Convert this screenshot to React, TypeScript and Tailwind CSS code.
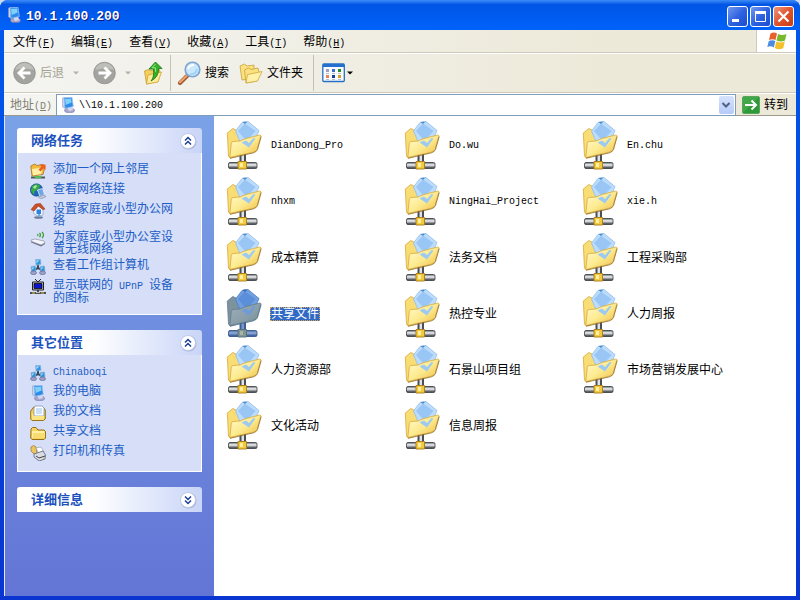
import { useState, type ReactNode } from "react";

const mono = "font-['Liberation_Mono','Noto_Sans_CJK_SC',monospace]";

function Latin({ children }: { children: ReactNode }) {
  return <span className={`${mono} text-[10px] leading-none`}>{children}</span>;
}

function ComputerIcon() {
  return (
    <svg className="h-4 w-4 shrink-0" viewBox="0 0 16 16" aria-hidden="true">
      <ellipse cx="9.500" cy="13.400" rx="5" ry="2.200" fill="#a9a6cf" stroke="#6f73a5" strokeWidth=".6" />
      <path d="M7 10l5-1 1 4-4 1z" fill="#d6d9ee" />
      <path d="M2.500 1l2-.7v11l-2-1.300z" fill="#c9d3ee" stroke="#8a94bd" strokeWidth=".5" />
      <path d="M4 .8L12 .3l1.300 9.200-8.300 2z" fill="#2c8bea" stroke="#9fc3ee" strokeWidth=".8" />
      <path d="M5 2l6-.6.6 4L5.700 8z" fill="#7fd0fb" />
    </svg>
  );
}

function AddPlaceIcon() {
  return (
    <svg className="h-4 w-4 shrink-0" viewBox="0 0 16 16" aria-hidden="true">
      <path d="M1 14.500h14" stroke="#4d5b57" strokeWidth="2" />
      <path d="M5 14h6" stroke="#4fc04f" strokeWidth="2" />
      <path d="M.8 3l4-2 2 1.500L13 1.500l2 2-2 8-11 1.500z" fill="#f3b93c" stroke="#a5761a" strokeWidth=".8" />
      <path d="M2 6l11-1.500-2 6.500-8 1.500z" fill="#fff0a5" />
      <path d="M9.500 1.500h6v5.500l-2-1.500-3 3-2-2 3-3z" fill="#ef5f22" />
    </svg>
  );
}

function GlobeIcon() {
  return (
    <svg className="h-4 w-4 shrink-0" viewBox="0 0 16 16" aria-hidden="true">
      <circle cx="6.500" cy="7" r="6.200" fill="#1d63b8" stroke="#184a8c" strokeWidth=".6" />
      <path d="M2 3l4-2 4 1-1 4-4 2-1 4-3-4z" fill="#38a84b" />
      <path d="M3 4l3-2 1 1-2 3z" fill="#b4eda4" />
      <path d="M7.500 7l5-1.500 2 6-4.500 2z" fill="#6aa7e5" stroke="#e8effa" strokeWidth=".8" />
      <path d="M8.500 14l6-2 1.200 1.800-5 2z" fill="#c9cfe0" stroke="#666f90" strokeWidth=".5" />
    </svg>
  );
}

function HomeIcon() {
  return (
    <svg className="h-4 w-4 shrink-0" viewBox="0 0 16 16" aria-hidden="true">
      <ellipse cx="8.500" cy="14.500" rx="4.500" ry="1.300" fill="#6f7a90" />
      <path d="M3 6l5-3 5 3v6l-5 1-4-2z" fill="#f4f5fb" stroke="#8b93b0" strokeWidth=".6" />
      <path d="M6.500 6.500h4.500v4.500H6.500z" fill="#2c83e2" />
      <path d="M8 11h2v3H8z" fill="#59b3f4" />
      <path d="M1 6.500l4.500-5.500 5-.5L15 6l-2 .8-4.500-3.800L4 8z" fill="#cc4f28" stroke="#93351b" strokeWidth=".5" />
    </svg>
  );
}

function WirelessIcon() {
  return (
    <svg className="h-4 w-4 shrink-0" viewBox="0 0 16 16" aria-hidden="true">
      <path d="M7.500 3q1 1 0 2M9.500 2q2 2 0 4M12 1q3 3 0 6" fill="none" stroke="#3c9c35" strokeWidth="1.200" />
      <path d="M1 9l4-1 9 2 1 2-4 2-10-4z" fill="#f5f6fa" stroke="#8c91a5" strokeWidth=".7" />
      <path d="M1 10.500l10 3.500 4-2v1l-4 2.500-10-4z" fill="#70778d" />
    </svg>
  );
}

function WorkgroupIcon() {
  return (
    <svg className="h-4 w-4 shrink-0" viewBox="0 0 16 16" aria-hidden="true">
      <path d="M8 5v4M8 9l-4 2M8 9l4 2" stroke="#34495d" strokeWidth="2" />
      <path d="M5.500.6l5-.3.500 5-5 .9z" fill="#3695e0" stroke="#8fb7df" strokeWidth=".7" />
      <path d="M1 7.500l4.500-.6.500 5-4.500.6zM10 7.500l4.500-.6.500 5-4.500.6z" fill="#3590da" stroke="#8fb7df" strokeWidth=".7" />
      <ellipse cx="3.500" cy="13.800" rx="3" ry="1.800" fill="#a09fc8" stroke="#555a8b" strokeWidth=".6" />
      <ellipse cx="12.500" cy="13.800" rx="3" ry="1.800" fill="#a09fc8" stroke="#555a8b" strokeWidth=".6" />
      <path d="M6.300 1.500l3.200-.3-3 3zM2 8.500l2.500-.3-2.300 2.500zM11 8.500l2.500-.3-2.300 2.500z" fill="#a5e1fc" />
    </svg>
  );
}

function UpnpIcon() {
  return (
    <svg className="h-4 w-4 shrink-0" viewBox="0 0 16 16" aria-hidden="true">
      <path d="M5 0l3 3 3-3" fill="none" stroke="#222" />
      <path d="M2.500 3h11v8h-11z" fill="#c9c9c9" stroke="#222" />
      <path d="M4 4.500h8v5H4z" fill="#0d16c8" stroke="#000" strokeWidth=".7" />
      <path d="M8 11v3M0 14h16" stroke="#222" strokeWidth="1.500" />
      <path d="M2 14h3M11 14h3" stroke="#d8cf3c" />
      <path d="M6 13.500h4" stroke="#b9b9b9" />
    </svg>
  );
}

function DocumentsIcon() {
  return (
    <svg className="h-4 w-4 shrink-0" viewBox="0 0 16 16" aria-hidden="true">
      <path d="M.7 6l3-4h9l2.600 3v9l-2 1.500H2L.7 14z" fill="#f3cc59" stroke="#9a7417" />
      <path d="M5 1h7l2 2v8H4V3z" fill="#fff" stroke="#6d8cb7" strokeWidth=".7" />
      <path d="M6 4h6M6 6h6M6 8h6" stroke="#78b2e8" strokeWidth=".8" />
      <path d="M1.500 7L4 11h10v2.500l-1 1.500H2z" fill="#ffe583" />
    </svg>
  );
}

function FolderIcon() {
  return (
    <svg className="h-4 w-4 shrink-0" viewBox="0 0 16 16" aria-hidden="true">
      <path d="M1 4l1.500-1.500H6L8 5h6l1.500 1.500v6.500L14 14.500H2L.7 13z" fill="#f6d35e" stroke="#94701a" />
      <path d="M2 6h12l.5 1v5L13 13H2.500L2 12z" fill="#fff0a4" />
      <path d="M3 8h11v5H3z" fill="#f9dc71" />
    </svg>
  );
}

function PrinterIcon() {
  return (
    <svg className="h-4 w-4 shrink-0" viewBox="0 0 16 16" aria-hidden="true">
      <path d="M1 2q3-3 5 0l1 7H4L1 6z" fill="#efc45c" stroke="#7d6a32" strokeWidth=".6" />
      <path d="M6 3l5-1 3 5-5 2z" fill="#fff" stroke="#8c93a5" strokeWidth=".6" />
      <path d="M4 9l9-3 2.500 4-.5 4-6 2-5-4z" fill="#d9dce4" stroke="#5b6275" strokeWidth=".8" />
      <path d="M6 11l3 2 6-2" fill="none" stroke="#3e465a" />
      <circle cx="13.500" cy="13" r=".7" fill="#e9c22e" />
    </svg>
  );
}

function NetworkFolderIcon({ selected }: { selected?: boolean }) {
  return (
    <svg className="h-[50px] w-9 shrink-0" viewBox="0 0 36 50" aria-hidden="true">
      <defs>
        <linearGradient id="folderFront" x1="0" y1="0" x2="1" y2="1">
          <stop offset="0" stopColor="#fffbd0" />
          <stop offset=".5" stopColor="#fdeb90" />
          <stop offset="1" stopColor="#ecb83c" />
        </linearGradient>
        <linearGradient id="pipe" x1="0" y1="0" x2="0" y2="1">
          <stop offset="0" stopColor="#5c6068" />
          <stop offset=".4" stopColor="#f4f6f8" />
          <stop offset="1" stopColor="#24272c" />
        </linearGradient>
        <linearGradient id="selectedFront" x1="0" y1="0" x2="1" y2="1">
          <stop offset="0" stopColor="#a0b1bb" />
          <stop offset="1" stopColor="#77909a" />
        </linearGradient>
        <linearGradient id="selectedPipe" x1="0" y1="0" x2="0" y2="1">
          <stop offset="0" stopColor="#46659b" />
          <stop offset=".4" stopColor="#93afdd" />
          <stop offset="1" stopColor="#264a86" />
        </linearGradient>
      </defs>
      <path d="M13.500 33h6.500v9h-6.500z" fill={selected ? "#3b5f97" : "#4b4f56"} />
      <path d="M15.500 33h2.500v9h-2.500z" fill={selected ? "#7b9acb" : "#dfe3e8"} />
      <rect x="2.500" y="41.500" width="28.500" height="6" rx="1.500" fill={selected ? "url(#selectedPipe)" : "url(#pipe)"} stroke={selected ? "#2c4d88" : "#3a3d43"} strokeWidth=".8" />
      <path d="M12 40.500h8.500v7.500H12z" fill={selected ? "#83958c" : "#f3c93d"} stroke={selected ? "#52707f" : "#a97c16"} strokeWidth=".9" />
      <path d="M14 42h3v4h-3z" fill={selected ? "#a5b5ac" : "#fdeea0"} />
      <path d="M1.300 12l5.500-4.500 3.200 1.500 1 3.500 20 2-3 14L4 37l-1.500-2z" fill={selected ? "#7c939e" : "#f8dc74"} stroke={selected ? "#637d91" : "#d8a93c"} strokeWidth=".8" />
      <path d="M9.500 10L16 1.500l3-1h3L33 9.500 29 19l-14 4z" fill={selected ? "#719fe0" : "#bcdcfc"} stroke={selected ? "#4e7dc3" : "#93bce8"} strokeWidth=".8" />
      <path d="M12 10l7-7.500 10.500 7.500-9 10z" fill={selected ? "#5c8fda" : "#9ac6f6"} />
      <path d="M16.500 1h4.500l-2 2z" fill={selected ? "#3969aa" : "#4c8ac8"} />
      <path d="M3.800 36.500L5.300 22.500q0-1.500 1.700-2l7-.5 6-2.500L33.800 14q1.200 0 1 1L31 28.500q-.5 1.500-3 2.500z" fill={selected ? "url(#selectedFront)" : "url(#folderFront)"} stroke={selected ? "#607c8f" : "#d8aa3d"} strokeWidth=".8" />
      <path d="M4 37.300l23.500-5.500q3.500-1.300 4-3.300L35.200 15.500" fill="none" stroke={selected ? "#4b6d85" : "#8f6a22"} strokeWidth=".8" />
      <path d="M15.500 21.500l4.500-2 3 2.500 4.500-5 2 .500-6.500 9z" fill={selected ? "#6f9ada" : "#9fcaf0"} />
    </svg>
  );
}

function NavArrow({ back }: { back?: boolean }) {
  return (
    <svg className="h-6 w-6" viewBox="0 0 24 24" aria-hidden="true">
      <circle cx="12.500" cy="12" r="10.800" fill="#a3a3a0" stroke="#8f8f8c" strokeWidth=".8" />
      <path d="M3 9a10 10 0 0 1 19 0q-9-3-19 0z" fill="#bdbdba" />
      {back ? (
        <path d="M18.500 12H8M12.500 6.500L7 12l5.500 5.500" fill="none" stroke="#fff" strokeWidth="2.800" />
      ) : (
        <path d="M6.500 12H17M12.500 6.500L18 12l-5.500 5.500" fill="none" stroke="#fff" strokeWidth="2.800" />
      )}
    </svg>
  );
}

function Caret({ dark }: { dark?: boolean }) {
  return (
    <svg className="h-2 w-2" viewBox="0 0 8 8" aria-hidden="true">
      <path d="M1 2.500h6L4 5.500z" fill={dark ? "#000" : "#b4b2a6"} />
    </svg>
  );
}

function UpFolderIcon() {
  return (
    <svg className="h-6 w-[22px]" viewBox="0 0 22 24" aria-hidden="true">
      <path d="M2.500 10l4-1.500 2.500 1 8-1.500 1 3-2 9.500L4.500 23z" fill="#f4cf59" stroke="#c79a31" strokeWidth=".8" />
      <path d="M4.500 23L6 14l13.500-3-3.500 10z" fill="#ffec98" stroke="#cfa23a" strokeWidth=".8" />
      <path d="M13.500 1l6.500 6.500h-3.500q.5 8.500-7.500 12.500 3.500-4 2.500-12H7z" fill="#34b32b" stroke="#177515" strokeWidth=".8" />
      <path d="M13.500 3l-3.500 3.800h3.500v4" fill="none" stroke="#9be584" />
    </svg>
  );
}

function SearchIcon() {
  return (
    <svg className="h-6 w-6" viewBox="0 0 24 24" aria-hidden="true">
      <path d="M10 15l-7 7" stroke="#9d5930" strokeWidth="4" strokeLinecap="round" />
      <path d="M9.500 15l-6.500 6.300" stroke="#eca46d" strokeWidth="2.200" strokeLinecap="round" />
      <circle cx="15.500" cy="8.500" r="7.300" fill="#c9e8fc" stroke="#7fa4cf" strokeWidth="1.600" />
      <path d="M11 8q1-4 6-4" fill="none" stroke="#fff" strokeWidth="2" />
      <path d="M13 13q6 1 7-5" fill="none" stroke="#9ed2f7" strokeWidth="2" />
    </svg>
  );
}

function FoldersIcon() {
  return (
    <svg className="h-6 w-6" viewBox="0 0 24 24" aria-hidden="true">
      <path d="M1 5l4.500-2 2.500 2 7-1v3L9 18l-6 1z" fill="#fbe27e" stroke="#c99f3d" strokeWidth=".8" />
      <path d="M5.500 9l4-2 2.500 1.500 7-1.500 1 4-2 9L7 22z" fill="#fae27f" stroke="#c99f3d" strokeWidth=".8" />
      <path d="M7 22l1.500-8.500L23 10.500 18.500 20z" fill="#fff2a8" stroke="#d0a640" strokeWidth=".8" />
    </svg>
  );
}

function ViewsIcon() {
  return (
    <svg className="h-5 w-6" viewBox="0 0 24 20" aria-hidden="true">
      <rect x=".8" y="1" width="21.500" height="17.500" rx="1" fill="#f8fbff" stroke="#256fc4" strokeWidth="1.300" />
      <path d="M1 1h21v3H1z" fill="#2370cf" />
      <path d="M4 6h3v3H4z" fill="#a29bc2" />
      <path d="M10 6h3v3h-3z" fill="#3a72c4" />
      <path d="M16 6h3v3h-3z" fill="#2c8b27" />
      <path d="M4 12h3v3H4z" fill="#eb8451" />
      <path d="M10 12h3v3h-3z" fill="#183e95" />
      <path d="M16 12h3v3h-3z" fill="#d4a221" />
      <path d="M4 10.500h3M10 10.500h3M16 10.500h3M4 16.500h3M10 16.500h3M16 16.500h3" stroke="#b9bfca" />
    </svg>
  );
}

function WindowsLogo() {
  return (
    <svg className="h-[18px] w-5" viewBox="0 0 20 18" aria-hidden="true">
      <path d="M3.500 1.500Q7-.5 10 1.500L8.500 8Q5.500 6.500 2 8z" fill="#e8602c" />
      <path d="M11 2q4 2 8.500 0L18 8.500q-4 2-8.500 0z" fill="#77b82d" />
      <path d="M1.800 9q3.500-1.500 6.500 0L6.800 15.500Q4 13.500.3 15z" fill="#4b8ce0" />
      <path d="M9.300 9.500q4 2 8.500 0l-1.500 6.500q-4 2.500-8.500 0z" fill="#f5bf2a" />
    </svg>
  );
}

function Chevrons({ open }: { open: boolean }) {
  return (
    <svg className="h-5 w-5" viewBox="0 0 20 20" aria-hidden="true">
      <circle cx="10.500" cy="10.500" r="8" fill="#a8b3d8" />
      <circle cx="10" cy="10" r="7.500" fill="#fff" stroke="#bcc5e2" strokeWidth=".8" />
      <path
        d={open ? "M7 9.500l3-3 3 3M7 13.500l3-3 3 3" : "M7 6.500l3 3 3-3M7 10.500l3 3 3-3"}
        fill="none"
        stroke="#1c3f94"
        strokeWidth="1.500"
      />
    </svg>
  );
}

type Task = { icon: ReactNode; label: ReactNode };

function Panel({ title, tasks, startOpen = true }: { title: string; tasks: Task[]; startOpen?: boolean }) {
  const [open, setOpen] = useState(startOpen);
  return (
    <section>
      <h2>
        <button
          type="button"
          aria-expanded={open}
          onClick={() => setOpen(!open)}
          className="flex h-[25px] w-full items-center justify-between rounded-t-[3px] bg-linear-to-r from-white from-40% to-[#c9d5f7] pr-1 pl-3.5 text-[13px] font-bold text-[#1c52bd]"
        >
          {title}
          <Chevrons open={open} />
        </button>
      </h2>
      {open && tasks.length > 0 && (
        <ul className="flex flex-col gap-1 border border-t-0 border-white bg-[#d6dff7] py-2.5 pr-6 pl-3">
          {tasks.map((task, i) => (
            <li key={i}>
              <a href="#" className="flex min-h-4 gap-[7px] text-xs leading-3 text-[#215dc6]">
                {task.icon}
                <span>{task.label}</span>
              </a>
            </li>
          ))}
        </ul>
      )}
    </section>
  );
}

const networkTasks: Task[] = [
  { icon: <AddPlaceIcon />, label: "添加一个网上邻居" },
  { icon: <GlobeIcon />, label: "查看网络连接" },
  { icon: <HomeIcon />, label: "设置家庭或小型办公网络" },
  { icon: <WirelessIcon />, label: "为家庭或小型办公室设置无线网络" },
  { icon: <WorkgroupIcon />, label: "查看工作组计算机" },
  { icon: <UpnpIcon />, label: <>显示联网的<Latin> UPnP </Latin>设备的图标</> },
];

const otherPlaces: Task[] = [
  { icon: <WorkgroupIcon />, label: <Latin>Chinaboqi</Latin> },
  { icon: <ComputerIcon />, label: "我的电脑" },
  { icon: <DocumentsIcon />, label: "我的文档" },
  { icon: <FolderIcon />, label: "共享文档" },
  { icon: <PrinterIcon />, label: "打印机和传真" },
];

const menus = [
  ["文件", "F"],
  ["编辑", "E"],
  ["查看", "V"],
  ["收藏", "A"],
  ["工具", "T"],
  ["帮助", "H"],
];

const shares = [
  "DianDong_Pro", "Do.wu", "En.chu",
  "nhxm", "NingHai_Project", "xie.h",
  "成本精算", "法务文档", "工程采购部",
  "共享文件", "热控专业", "人力周报",
  "人力资源部", "石景山项目组", "市场营销发展中心",
  "文化活动", "信息周报",
];

const isLatin = (name: string) => /^[\w.]+$/.test(name);

export default function App() {
  const [selected, setSelected] = useState("共享文件");
  const [address, setAddress] = useState("\\\\10.1.100.200");

  return (
    <div className="min-h-screen bg-[#c9daf5] font-['Liberation_Sans','Noto_Sans_CJK_SC',sans-serif] text-xs text-black">
      <div className="flex min-h-screen flex-col rounded-t-lg bg-linear-to-b from-[#0058ee] to-[#0a35d0] pb-1">
        <header className="flex h-[30px] shrink-0 items-center rounded-t-lg bg-linear-to-b from-[#3c8cf8] via-[#0055e5] via-15% to-[#0062fb] pr-1.5 pl-1.5">
          <ComputerIcon />
          <h1 className={`${mono} ml-1 flex-1 pt-1 text-[13px] font-bold text-white [text-shadow:1px_1px_#0a1883]`}>10.1.100.200</h1>
          <div className="flex gap-0.5 pt-0.5">
            <button type="button" aria-label="最小化" className="h-[21px] w-[21px] rounded-[3px] border border-white bg-linear-to-br from-[#7397ef] via-[#2f63e0] to-[#1c4bcf]">
              <svg viewBox="0 0 19 19" aria-hidden="true"><path d="M4 12h7v3H4z" fill="#fff" /></svg>
            </button>
            <button type="button" aria-label="最大化" className="h-[21px] w-[21px] rounded-[3px] border border-white bg-linear-to-br from-[#7397ef] via-[#2f63e0] to-[#1c4bcf]">
              <svg viewBox="0 0 19 19" aria-hidden="true"><path d="M4.500 5h10v9.500h-10z" fill="none" stroke="#fff" /><path d="M4 4h11v3H4z" fill="#fff" /></svg>
            </button>
            <button type="button" aria-label="关闭" className="h-[21px] w-[21px] rounded-[3px] border border-white bg-linear-to-br from-[#f0947a] via-[#e0532c] to-[#c63c12]">
              <svg viewBox="0 0 19 19" aria-hidden="true"><path d="M4.500 4.500l10 10M14.500 4.500l-10 10" stroke="#fff" strokeWidth="2.200" /></svg>
            </button>
          </div>
        </header>

        <div className="mx-1 flex flex-1 flex-col bg-linear-to-r from-[#f4f4f1] to-[#ece9d8] to-80%">
          <nav className="flex h-[23px] border-b border-[#cdcabb]">
            <ul className="flex flex-1 items-center gap-4 pt-0.5 pl-[9px]">
              {menus.map(([label, key]) => (
                <li key={key}>
                  <button type="button" className="block leading-4">
                    {label}
                    <Latin>(<u>{key}</u>)</Latin>
                  </button>
                </li>
              ))}
            </ul>
            <div className="flex w-10 items-center justify-center border-l border-[#cdcabb] bg-white">
              <WindowsLogo />
            </div>
          </nav>

          <div className="flex h-10 items-center border-t border-b border-t-white border-b-[#cdcabb] pl-2" role="toolbar" aria-label="标准按钮">
            <button type="button" disabled className="flex items-center gap-1 text-[#a5a294]"><NavArrow back />后退</button>
            <button type="button" disabled aria-label="后退列表" className="ml-2"><Caret /></button>
            <button type="button" disabled aria-label="前进" className="ml-3"><NavArrow /></button>
            <button type="button" disabled aria-label="前进列表" className="ml-2"><Caret /></button>
            <button type="button" aria-label="向上" className="ml-2.5"><UpFolderIcon /></button>
            <span className="ml-1.5 h-9 border-l border-[#c5c2b2]" />
            <button type="button" className="ml-1.5 flex items-center gap-1"><SearchIcon />搜索</button>
            <button type="button" className="ml-2.5 flex items-center gap-1"><FoldersIcon />文件夹</button>
            <span className="ml-2.5 h-9 border-l border-[#c5c2b2]" />
            <button type="button" aria-label="查看" className="ml-2 flex items-center"><ViewsIcon /><Caret dark /></button>
          </div>

          <form className="flex h-[23px] items-center border-t border-b border-t-white border-b-[#9c9a8e] pr-2 pl-1.5" onSubmit={(e) => e.preventDefault()}>
            <label htmlFor="address" className="leading-4 text-[#827f73]">地址<Latin>(<u>D</u>)</Latin></label>
            <div className="ml-1 flex h-[22px] flex-1 items-center border border-[#7f9db9] bg-white pr-px pl-[3px]">
              <ComputerIcon />
              <input
                id="address"
                value={address}
                onChange={(e) => setAddress(e.target.value)}
                className={`${mono} ml-[3px] min-w-0 flex-1 pt-0.5 text-[10px] leading-4 outline-none`}
              />
              <button type="button" aria-label="地址列表" className="flex h-[18px] w-[15px] items-center justify-center rounded-xs bg-linear-to-b from-[#d6e2fd] to-[#b6cbf8]">
                <svg className="h-2 w-2.5" viewBox="0 0 10 8" aria-hidden="true"><path d="M1.500 2L5 5.500 8.500 2" fill="none" stroke="#4d6185" strokeWidth="2" /></svg>
              </button>
            </div>
            <button type="submit" className="ml-1.5 flex items-center gap-1">
              <svg className="h-[18px] w-[18px]" viewBox="0 0 18 18" aria-hidden="true">
                <rect x=".5" y=".5" width="17" height="17" rx="1.500" fill="#2c9a37" stroke="#5aa35e" />
                <path d="M1 1h16L1 17z" fill="#55b55b" opacity=".5" />
                <path d="M3 9h11M9.500 4.500L14 9l-4.500 4.500" fill="none" stroke="#fff" strokeWidth="2" />
              </svg>
              转到
            </button>
          </form>

          <div className="flex flex-1">
            <aside className="flex w-[210px] shrink-0 flex-col gap-[15px] border-l border-[#dfe7f8] bg-linear-to-b from-[#7ba2e7] to-[#6375d6] px-3 py-3">
              <Panel title="网络任务" tasks={networkTasks} />
              <Panel title="其它位置" tasks={otherPlaces} />
              <Panel title="详细信息" tasks={[]} startOpen={false} />
            </aside>
            <main className="flex-1 bg-white pt-[5px] pl-3">
              <ul className="grid grid-cols-[repeat(auto-fill,178px)] gap-y-1.5">
                {shares.map((name) => {
                  const active = name === selected;
                  return (
                    <li key={name}>
                      <button type="button" aria-pressed={active} onClick={() => setSelected(name)} className="flex items-center gap-2">
                        <NetworkFolderIcon selected={active} />
                        <span
                          className={`border border-dotted leading-3 ${active ? "border-[#e0a050] bg-[#316ac5] text-white" : "border-transparent"} ${isLatin(name) ? "font-['Liberation_Mono',monospace] text-[10px]" : "text-xs"}`}
                        >
                          {name}
                        </span>
                      </button>
                    </li>
                  );
                })}
              </ul>
            </main>
          </div>
        </div>
      </div>
    </div>
  );
}
